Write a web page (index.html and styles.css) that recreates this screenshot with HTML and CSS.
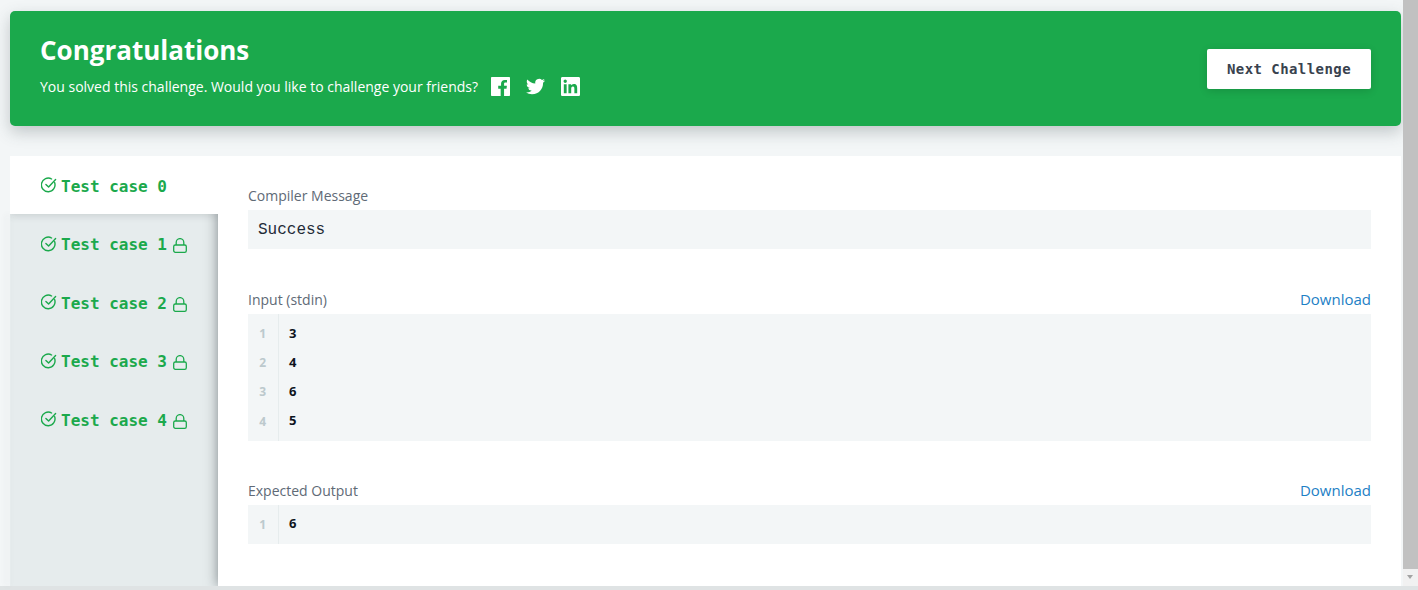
FILE: index.html
```html
<!DOCTYPE html>
<html lang="en">
<head>
<meta charset="utf-8">
<title>Congratulations</title>
<link rel="stylesheet" href="styles.css">
</head>
<body>
<div class="viewport">
  <main class="page">
    <section class="banner">
      <div class="banner-text">
        <h1 class="banner-title">Congratulations</h1>
        <div class="banner-sub">
          <span>You solved this challenge. Would you like to challenge your friends?</span>
          <svg class="social" viewBox="0 0 24 24"><path fill-rule="evenodd" d="M1 0h22a1 1 0 0 1 1 1v22a1 1 0 0 1-1 1h-6.5v-9.3h3.1l.5-3.6h-3.6V8.8c0-1 .3-1.75 1.8-1.75h1.9V3.8c-.3 0-1.5-.15-2.8-.15-2.8 0-4.7 1.7-4.7 4.8v2.65H9.1v3.6h3.1V24H1a1 1 0 0 1-1-1V1a1 1 0 0 1 1-1z"/></svg>
          <svg class="social" viewBox="0 0 24 24"><path d="M23.953 4.57a10 10 0 0 1-2.825.775 4.958 4.958 0 0 0 2.163-2.723c-.951.555-2.005.959-3.127 1.184a4.92 4.92 0 0 0-8.384 4.482C7.69 8.095 4.067 6.13 1.64 3.162a4.822 4.822 0 0 0-.666 2.475c0 1.71.87 3.213 2.188 4.096a4.904 4.904 0 0 1-2.228-.616v.06a4.923 4.923 0 0 0 3.946 4.827 4.996 4.996 0 0 1-2.212.085 4.936 4.936 0 0 0 4.604 3.417 9.867 9.867 0 0 1-6.102 2.105c-.39 0-.779-.023-1.17-.067a13.995 13.995 0 0 0 7.557 2.209c9.053 0 13.998-7.496 13.998-13.985 0-.21 0-.42-.015-.63A9.935 9.935 0 0 0 24 4.59z"/></svg>
          <svg class="social" viewBox="0 0 24 24"><path d="M20.447 20.452h-3.554v-5.569c0-1.328-.027-3.037-1.852-3.037-1.853 0-2.136 1.445-2.136 2.939v5.667H9.351V9h3.414v1.561h.046c.477-.9 1.637-1.85 3.37-1.85 3.601 0 4.267 2.37 4.267 5.455v6.286zM5.337 7.433c-1.144 0-2.063-.926-2.063-2.065 0-1.138.92-2.063 2.063-2.063 1.14 0 2.064.925 2.064 2.063 0 1.139-.925 2.065-2.064 2.065zm1.782 13.019H3.555V9h3.564v11.452zM22.225 0H1.771C.792 0 0 .774 0 1.729v20.542C0 23.227.792 24 1.771 24h20.451C23.2 24 24 23.227 24 22.271V1.729C24 .774 23.2 0 22.222 0h.003z"/></svg>
        </div>
      </div>
      <button class="next-btn">Next Challenge</button>
    </section>

    <section class="panel">
      <nav class="tabs">
        <div class="tab tab-active">
          <svg class="check" viewBox="0 0 16 16"><path d="M13.6 5.6A6.8 6.8 0 1 1 10.6 2"/><path d="M4.9 7.4l2.7 2.7L14.6 2.6"/></svg>
          <span>Test case 0</span>
        </div>
        <div class="tab">
          <svg class="check" viewBox="0 0 16 16"><path d="M13.6 5.6A6.8 6.8 0 1 1 10.6 2"/><path d="M4.9 7.4l2.7 2.7L14.6 2.6"/></svg>
          <span>Test case 1</span>
          <svg class="lock" viewBox="0 0 14 15"><rect x=".7" y="7" width="12.6" height="7.3" rx="1.6"/><path d="M3.2 7V4.4a3.8 3.8 0 0 1 7.6 0V7"/></svg>
        </div>
        <div class="tab">
          <svg class="check" viewBox="0 0 16 16"><path d="M13.6 5.6A6.8 6.8 0 1 1 10.6 2"/><path d="M4.9 7.4l2.7 2.7L14.6 2.6"/></svg>
          <span>Test case 2</span>
          <svg class="lock" viewBox="0 0 14 15"><rect x=".7" y="7" width="12.6" height="7.3" rx="1.6"/><path d="M3.2 7V4.4a3.8 3.8 0 0 1 7.6 0V7"/></svg>
        </div>
        <div class="tab">
          <svg class="check" viewBox="0 0 16 16"><path d="M13.6 5.6A6.8 6.8 0 1 1 10.6 2"/><path d="M4.9 7.4l2.7 2.7L14.6 2.6"/></svg>
          <span>Test case 3</span>
          <svg class="lock" viewBox="0 0 14 15"><rect x=".7" y="7" width="12.6" height="7.3" rx="1.6"/><path d="M3.2 7V4.4a3.8 3.8 0 0 1 7.6 0V7"/></svg>
        </div>
        <div class="tab">
          <svg class="check" viewBox="0 0 16 16"><path d="M13.6 5.6A6.8 6.8 0 1 1 10.6 2"/><path d="M4.9 7.4l2.7 2.7L14.6 2.6"/></svg>
          <span>Test case 4</span>
          <svg class="lock" viewBox="0 0 14 15"><rect x=".7" y="7" width="12.6" height="7.3" rx="1.6"/><path d="M3.2 7V4.4a3.8 3.8 0 0 1 7.6 0V7"/></svg>
        </div>
      </nav>

      <div class="details">
        <div class="block block-gap">
          <div class="block-head"><span class="block-label">Compiler Message</span></div>
          <div class="message">Success</div>
        </div>
        <div class="block block-gap">
          <div class="block-head"><span class="block-label">Input (stdin)</span><a class="download">Download</a></div>
          <div class="code">
            <div class="code-line"><span class="line-no">1</span><span class="line-text">3</span></div>
            <div class="code-line"><span class="line-no">2</span><span class="line-text">4</span></div>
            <div class="code-line"><span class="line-no">3</span><span class="line-text">6</span></div>
            <div class="code-line"><span class="line-no">4</span><span class="line-text">5</span></div>
          </div>
        </div>
        <div class="block">
          <div class="block-head"><span class="block-label">Expected Output</span><a class="download">Download</a></div>
          <div class="code">
            <div class="code-line"><span class="line-no">1</span><span class="line-text">6</span></div>
          </div>
        </div>
      </div>
    </section>
  </main>
  <div class="scrollbar">
    <div class="thumb"></div>
    <div class="scroll-arrow"></div>
  </div>
</div>
<div class="hbar"></div>
</body>
</html>
```

FILE: styles.css
```css
* { box-sizing: border-box; }

html, body {
  margin: 0;
  height: 590px;
  overflow: hidden;
}

body {
  font-family: "Open Sans", sans-serif;
  background: #f3f6f7;
  display: flex;
  flex-direction: column;
}

.viewport {
  display: flex;
  height: 586px;
}

.page {
  width: 1403px;
  padding: 11px 2px 0 10px;
  display: flex;
  flex-direction: column;
}

.banner {
  height: 115px;
  background: #1ba94c;
  border-radius: 5px;
  box-shadow: 0 6px 16px rgba(60, 75, 80, .28);
  padding: 0 30px;
  display: flex;
  align-items: center;
  justify-content: space-between;
  color: #fff;
}

.banner-text {
  margin-top: -7px;
}

.banner-title {
  margin: 0;
  font-size: 26px;
  font-weight: 700;
  line-height: 32px;
}

.banner-sub {
  margin-top: 11px;
  display: flex;
  align-items: center;
  font-size: 14px;
  line-height: 20px;
}

.social {
  width: 19px;
  height: 19px;
  fill: #fff;
  margin-left: 16px;
}

.social:first-of-type { margin-left: 13px; }

.next-btn {
  width: 164px;
  height: 40px;
  border: 0;
  border-radius: 2px;
  background: #fff;
  color: #39424e;
  font-family: "DejaVu Sans Mono", monospace;
  font-size: 14px;
  font-weight: 700;
  letter-spacing: .43px;
  box-shadow: 0 2px 8px rgba(0, 0, 0, .14);
}

.panel {
  margin-top: 30px;
  height: 430px;
  background: #fff;
  display: flex;
}

.tabs {
  width: 208px;
  flex: none;
  background: #e6eced;
  position: relative;
}

.tabs::before {
  content: "";
  position: absolute;
  left: 0;
  top: 58px;
  bottom: 0;
  width: 1px;
  box-shadow: -3px 0 7px rgba(60, 70, 75, .16);
}

.tab {
  height: 58.5px;
  padding: 2px 0 0 31px;
  display: flex;
  align-items: center;
  color: #1ba94c;
  font-family: "DejaVu Sans Mono", monospace;
  font-size: 16px;
  font-weight: 700;
  white-space: pre;
}

.tab-active {
  height: 58px;
  margin-bottom: .5px;
  background: #fff;
  position: relative;
  z-index: 2;
  box-shadow: 0 2px 7px rgba(60, 70, 75, .16);
  clip-path: inset(0 0 -12px 0);
}

.check {
  width: 16px;
  height: 16px;
  margin: -2px 4px 0 0;
  fill: none;
  stroke: #1ba94c;
  stroke-width: 1.4;
  stroke-linecap: round;
  stroke-linejoin: round;
}

.lock {
  width: 14px;
  height: 15px;
  margin: 2px 0 0 6px;
  fill: none;
  stroke: #1ba94c;
  stroke-width: 1.3;
}

.details {
  flex: 1;
  padding: 30px 30px 0;
  background: #fff;
  position: relative;
  z-index: 1;
  box-shadow: 0 0 12px rgba(40, 50, 55, .55);
  clip-path: inset(0 0 0 -16px);
}

.block-gap { margin-bottom: 41px; }
.block-gap + .block-gap { margin-bottom: 40px; }

.block-head {
  display: flex;
  justify-content: space-between;
  align-items: flex-start;
  height: 24px;
  font-size: 14px;
  line-height: 20px;
}

.block-label { color: #606a76; }

.download {
  color: #1d80c5;
  font-size: 15px;
  margin-top: -1px;
}

.message {
  height: 39px;
  padding-left: 10px;
  display: flex;
  align-items: center;
  background: #f3f6f7;
  color: #1f2b38;
  font-family: "Liberation Mono", monospace;
  font-size: 16px;
}

.code {
  background: #f3f6f7;
  padding: 5px 0;
}

.code-line {
  display: flex;
  height: 29.2px;
  font-size: 12px;
  font-weight: 700;
  align-items: stretch;
}

.line-no {
  width: 31px;
  padding-right: 12px;
  border-right: 1px solid #e6eced;
  margin-top: -5px;
  margin-bottom: -5px;
  display: flex;
  align-items: center;
  justify-content: flex-end;
  color: #bcc9cd;
}

.line-text {
  padding: 0 0 2px 10px;
  display: flex;
  align-items: center;
  color: #0e141e;
  font-size: 13px;
}

.scrollbar {
  width: 15px;
  flex: none;
  background: #f1f1f1;
  display: flex;
  flex-direction: column;
}

.thumb {
  flex: 1;
  background: #c1c1c1;
}

.scroll-arrow {
  height: 17px;
  position: relative;
}

.scroll-arrow::after {
  content: "";
  position: absolute;
  left: 4px;
  top: 6px;
  border-left: 3.5px solid transparent;
  border-right: 3.5px solid transparent;
  border-top: 4px solid #a3a3a3;
}

.hbar {
  height: 4px;
  background: #dfe3e4;
}
```
